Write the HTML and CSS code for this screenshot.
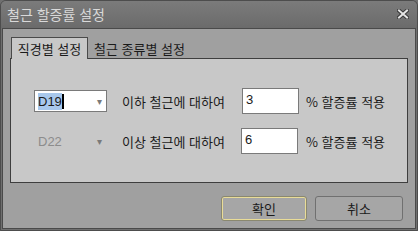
FILE: index.html
```html
<!DOCTYPE html>
<html lang="ko">
<head>
    <meta charset="UTF-8">
    <title>철근 할증률 설정</title>
    <link rel="stylesheet" href="styles.css">
</head>
<body>
    <div class="window">
        <div class="titlebar">
            <span class="title">철근 할증률 설정</span>
            <svg class="close" width="12" height="10" viewBox="0 0 12 10">
                <path d="M2 1.5 L10 8.5 M10 1.5 L2 8.5" stroke="#3a3a3a" stroke-width="4" stroke-linecap="square"/>
                <path d="M2 1.5 L10 8.5 M10 1.5 L2 8.5" stroke="#e4e4e4" stroke-width="2" stroke-linecap="square"/>
            </svg>
        </div>
        <div class="content">
            <div class="tabs">
                <div class="tab active">직경별 설정</div>
                <div class="tab">철근 종류별 설정</div>
            </div>
            <div class="panel">
                <div class="row">
                    <div class="combo">
                        <span class="value"><span class="selected">D19</span><span class="caret"></span></span>
                        <span class="arrow">▾</span>
                    </div>
                    <span class="label">이하 철근에 대하여</span>
                    <div class="field">3</div>
                    <span class="suffix">% 할증률 적용</span>
                </div>
                <div class="row">
                    <div class="combo disabled">
                        <span class="value">D22</span>
                        <span class="arrow">▾</span>
                    </div>
                    <span class="label">이상 철근에 대하여</span>
                    <div class="field">6</div>
                    <span class="suffix">% 할증률 적용</span>
                </div>
            </div>
            <div class="buttons">
                <button class="btn default">확인</button>
                <button class="btn">취소</button>
            </div>
        </div>
    </div>
</body>
</html>
```

FILE: styles.css
```css
* {
    box-sizing: border-box;
}

body {
    margin: 0;
    font-family: "Noto Sans CJK KR", "Noto Sans", sans-serif;
    font-size: 13px;
    color: #1a1a1a;
    background: #6f6f6f;
}

.window {
    width: 418px;
    height: 231px;
    border: 1px solid #4d4d4d;
    border-radius: 6px 6px 0 0;
    background: #6f6f6f;
    display: flex;
    flex-direction: column;
    overflow: hidden;
}

.titlebar {
    height: 27px;
    flex-shrink: 0;
    display: flex;
    align-items: center;
    justify-content: space-between;
    padding: 0 8px 0 6px;
    background: linear-gradient(#7b7b7b, #6b6b6b);
}

.title {
    font-size: 14px;
    color: #d9d9d9;
    line-height: 1;
    margin-top: -1px;
}

.close {
    margin-top: -2px;
}

.content {
    flex: 1;
    margin: 0 1px 1px 1px;
    border: 1px solid #4a4a4a;
    background: #a0a0a0;
    padding: 8px 7px 0 7px;
    display: flex;
    flex-direction: column;
}

.tabs {
    display: flex;
    height: 22px;
    position: relative;
    z-index: 1;
    margin-bottom: -1px;
}

.tab {
    padding: 0 5px 0 6px;
    display: flex;
    align-items: center;
    line-height: 1;
}

.tab.active {
    width: 77px;
    justify-content: center;
    padding: 0;
    margin-left: 1px;
    background: #c8c8c8;
    border: 1px solid #4a4a4a;
    border-bottom: none;
    height: 22px;
}

.panel {
    height: 125px;
    flex-shrink: 0;
    border: 1px solid #3e3e3e;
    background: #c8c8c8;
    padding: 29px 0 0 23px;
    display: flex;
    flex-direction: column;
    gap: 14px;
}

.row {
    display: flex;
    align-items: center;
    height: 26px;
}

.combo {
    width: 73px;
    height: 22px;
    align-self: flex-start;
    margin-top: 2px;
    border: 1px solid #7a7a7a;
    background: #fff;
    display: flex;
    align-items: center;
    justify-content: space-between;
    padding: 0 6px 0 2px;
    margin-right: 15px;
    font-family: "Liberation Sans", sans-serif;
    font-size: 13px;
}

.combo .selected {
    background: #a8c8ec;
    padding: 1px 0;
}

.caret {
    display: inline-block;
    width: 2px;
    height: 15px;
    background: #000;
    vertical-align: -3px;
}

.combo.disabled {
    background: transparent;
    border-color: transparent;
    color: #8c8c8c;
}

.arrow {
    color: #7a7a7a;
    font-size: 10px;
    margin-right: -2px;
}

.combo .value {
    padding-left: 1px;
}

.label {
    width: 120px;
}

.field {
    width: 57px;
    height: 26px;
    border: 1px solid #7a7a7a;
    background: #fff;
    padding: 2px 3px;
    font-family: "Liberation Sans", sans-serif;
    font-size: 13px;
    line-height: 17px;
    margin-right: 7px;
}

.row + .row .field {
    margin-left: -1px;
    margin-right: 8px;
}

.buttons {
    display: flex;
    justify-content: flex-end;
    gap: 8px;
    margin-top: 13px;
    padding-right: 5px;
}

.btn {
    height: 25px;
    width: 88px;
    border: 1px solid #707070;
    border-radius: 3px;
    background: #a6a6a6;
    font-family: inherit;
    font-size: 13px;
    color: #1a1a1a;
    padding: 0;
}

.btn.default {
    width: 86px;
    border-color: #8a8870;
    box-shadow: inset 0 0 0 1px #e9dc98;
}
```
